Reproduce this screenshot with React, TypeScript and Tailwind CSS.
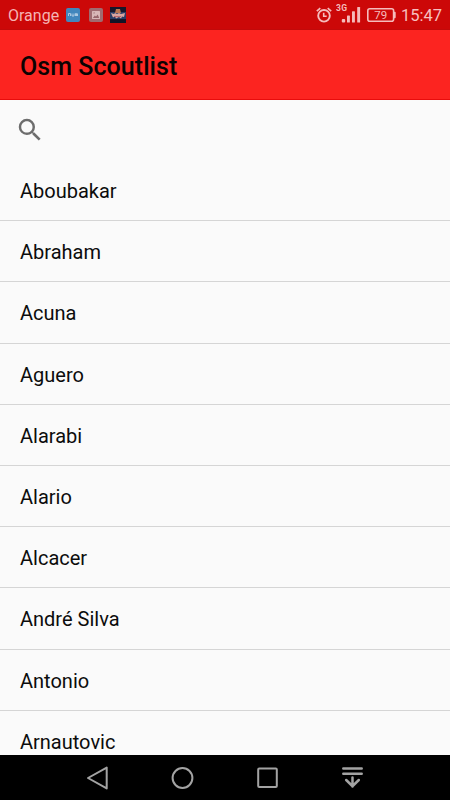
import React from "react";

const players = [
  "Aboubakar",
  "Abraham",
  "Acuna",
  "Aguero",
  "Alarabi",
  "Alario",
  "Alcacer",
  "André Silva",
  "Antonio",
  "Arnautovic",
];

function StatusBar() {
  return (
    <div className="flex h-[30px] shrink-0 items-center border-b border-[#c20a0a] bg-[#cc0808] pl-[8px] pr-[8px] pt-px text-[#f5b4b4]">
      <span className="w-[58px] pt-px text-[16px] leading-[28px]">Orange</span>
      <svg width="14" height="14" viewBox="0 0 14 14" className="shrink-0">
        <rect width="14" height="14" rx="2" fill="#4186bd" />
        <path d="M2.5 8V5.5h2V8M6 5.5V8h2V5.5M9.5 8V5.5h1V8M11.5 5.5V8" fill="none" stroke="#b5cfe6" strokeWidth="0.9" />
      </svg>
      <svg width="14" height="14" viewBox="0 0 14 14" className="ml-[9px] shrink-0">
        <rect width="14" height="14" rx="2" fill="#a06b70" />
        <rect x="3" y="3" width="8" height="8" rx="0.6" fill="#d9b8b8" />
        <path d="M3.9 9.9l1.9-2.4 1.2 1L8.7 6.4l1.5 3.5z" fill="#98666b" />
        <circle cx="5.1" cy="4.9" r="0.6" fill="#98666b" />
      </svg>
      <svg width="16" height="16" viewBox="0 0 16 16" className="ml-[7px] shrink-0">
        <rect width="16" height="16" fill="#17172b" />
        <path d="M0 5h16v7H0z" fill="#283d66" />
        <path d="M6 2h4l1 4H5z" fill="#b9744f" />
        <path d="M1 6l3 1 1-1 2 1 2-1 2 1 4-1-1 4-2-.5-1 2-2-1.5-3 1.5-1-2-2 1z" fill="#d7a5a0" />
        <path d="M4 9.5h7" stroke="#b45a60" strokeWidth="0.8" />
        <path d="M0 13h16v3H0z" fill="#111426" />
      </svg>
      <div className="flex-1" />
      <svg width="16" height="18" viewBox="0 0 16 18" className="shrink-0" fill="none" stroke="#f5bcbc" strokeWidth="1.9">
        <circle cx="8" cy="9.8" r="5.8" />
        <path d="M7.7 6.8v3.4h3" strokeWidth="1.6" />
        <path d="M.8 5.1l3.5-2.9M15.2 5.1l-3.5-2.9" strokeWidth="1.7" />
      </svg>
      <svg width="26" height="24" viewBox="0 0 26 24" className="ml-[4px] shrink-0" fill="#f5bcbc">
        <text x="0" y="7.7" fontSize="8.5" fontWeight="700" fontFamily="Roboto, sans-serif" textLength="11">3G</text>
        <rect x="5.8" y="16" width="3.4" height="3.6" rx="1" />
        <rect x="11" y="12.6" width="2.9" height="7" rx="0.6" />
        <rect x="16" y="8.2" width="2.9" height="11.4" rx="0.6" />
        <rect x="21.2" y="4" width="2.9" height="15.6" rx="0.6" />
      </svg>
      <div className="ml-[5px] flex shrink-0 items-center">
        <svg width="29" height="14" viewBox="0 0 29 14">
          <rect x="0.8" y="0.8" width="25.8" height="12.4" rx="2" fill="none" stroke="#f5bcbc" strokeWidth="1.6" />
          <path d="M27 3.8h.8q.9 0 .9.9v4.6q0 .9-.9.9H27z" fill="#f5bcbc" />
          <text x="13.7" y="11.1" textAnchor="middle" fontSize="11.5" fontFamily="Roboto, sans-serif" fill="#f5bcbc">
            79
          </text>
        </svg>
      </div>
      <span className="ml-[5px] w-[41px] whitespace-nowrap pt-px text-[16.5px] leading-[28px] text-[#f7c0c0]">15:47</span>
    </div>
  );
}

function NavigationBar() {
  return (
    <nav className="flex h-[45px] shrink-0 items-center bg-black pl-[86px] text-[#a3a3a3]">
      <svg width="24" height="24" viewBox="0 0 24 24" fill="none" stroke="currentColor" strokeWidth="2" strokeLinejoin="round">
        <path d="M20.7 1.6v20.8L2 12z" />
      </svg>
      <svg width="24" height="24" viewBox="0 0 24 24" className="ml-[61px]" fill="none" stroke="currentColor" strokeWidth="2">
        <circle cx="11.5" cy="12" r="9.9" />
      </svg>
      <svg width="24" height="24" viewBox="0 0 24 24" className="ml-[61px]" fill="none" stroke="currentColor" strokeWidth="2">
        <rect x="2.2" y="2.4" width="18.6" height="18.6" rx="1" />
      </svg>
      <svg width="24" height="24" viewBox="0 0 24 24" className="ml-[61px]" fill="none" stroke="currentColor" strokeWidth="2.5" strokeLinecap="round">
        <path d="M2.3 2.6h18.4M2.3 7.7h18.4" />
        <path d="M11.5 11.5v9M5.2 14l6.3 6.2 6.3-6.2" />
      </svg>
    </nav>
  );
}

export default function App() {
  return (
    <div className="flex h-[800px] w-[450px] flex-col overflow-hidden bg-[#fafafa] font-[Roboto,sans-serif]">
      <StatusBar />
      <header className="flex h-[70px] shrink-0 items-center border-b border-[#e80c0c] bg-[#fc2420] px-[20px] pt-[4px]">
        <h1 className="text-[25px] font-medium leading-[30px] tracking-[0.05px] text-[#0c0202]">Osm Scoutlist</h1>
      </header>
      <div className="flex h-[60px] shrink-0 items-center pl-[15px]">
        <svg width="30" height="30" viewBox="0 0 24 24" fill="#6d6d6d">
          <path d="M15.5 14h-.79l-.28-.27A6.471 6.471 0 0 0 16 9.5 6.5 6.5 0 1 0 9.5 16c1.61 0 3.09-.59 4.23-1.57l.27.28v.79l5 4.99L20.49 19l-4.99-5zm-6 0C7.01 14 5 11.99 5 9.5S7.01 5 9.5 5 14 7.01 14 9.5 11.99 14 9.5 14z" />
        </svg>
      </div>
      <ul className="min-h-0 flex-1 overflow-hidden">
        {players.map((name) => (
          <li
            key={name}
            className="flex h-[61.2px] items-center border-b border-[#d5d5d5] px-[20px] pt-[2px] text-[20px] leading-[24px] text-[#0c0c0c]"
          >
            {name}
          </li>
        ))}
      </ul>
      <NavigationBar />
    </div>
  );
}
